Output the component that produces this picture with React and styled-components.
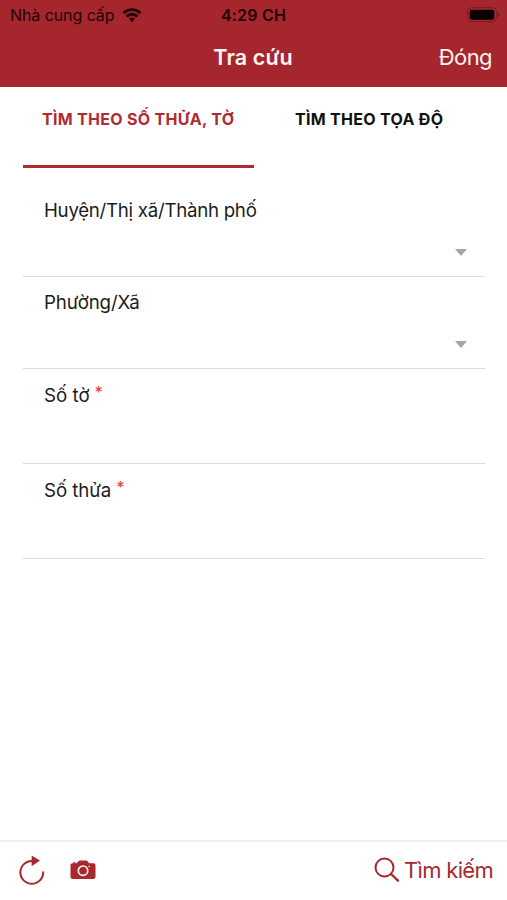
import React, { useState } from 'react';
import styled, { createGlobalStyle } from 'styled-components';

const GlobalStyle = createGlobalStyle`
  * {
    box-sizing: border-box;
  }

  body {
    margin: 0;
    background-color: #ffffff;
    font-family: Inter, 'Liberation Sans', sans-serif;
  }

  button {
    padding: 0;
    border: none;
    background: none;
    font-family: inherit;
    cursor: pointer;
  }
`;

const Container = styled.div`
  display: flex;
  flex-direction: column;
  height: 100vh;
  color: #1c1c1c;
  white-space: nowrap;
`;

const Header = styled.header`
  height: 87px;
  background-color: #a5262d;
`;

const StatusBar = styled.div`
  display: grid;
  grid-template-columns: 1fr auto 1fr;
  align-items: center;
  height: 30px;
  padding: 0 10px;
  color: #1f0305;
  font-size: 16px;
`;

const Carrier = styled.div`
  display: flex;
  align-items: center;
  gap: 7px;
  letter-spacing: -0.08px;
`;

const Clock = styled.div`
  font-weight: 600;
  letter-spacing: 0.2px;
`;

const Battery = styled.svg`
  justify-self: end;
  margin-right: -3px;
`;

const NavBar = styled.div`
  display: grid;
  grid-template-columns: 1fr auto 1fr;
  align-items: center;
  height: 54px;
  padding: 0 15px 0 14px;
  color: #fff4f4;
`;

const Title = styled.h1`
  grid-column: 2;
  margin: 0;
  font-size: 21.5px;
  font-weight: 600;
  letter-spacing: 0.1px;
`;

const CloseButton = styled.button`
  justify-self: end;
  color: inherit;
  font-size: 22px;
  letter-spacing: -0.6px;
`;

const Tabs = styled.div`
  display: flex;
  gap: 22px;
  height: 81px;
  margin-left: 23px;
`;

const Tab = styled.button`
  display: flex;
  align-items: flex-start;
  width: 231px;
  padding: 20px 0 0 19px;
  border-bottom: 3px solid ${props => props.$active ? '#b12a32' : 'transparent'};
  color: ${props => props.$active ? '#b12a32' : '#101010'};
  font-size: 16px;
  font-weight: 700;
  line-height: 24px;
  letter-spacing: 0.3px;
`;

const Form = styled.main`
  flex: 1;
  padding: 16px 22px 0 23px;
`;

const Field = styled.div`
  display: flex;
  flex-direction: column;
  height: ${props => props.$height}px;
  padding: ${props => props.$inset}px 18px 0 21px;
  border-bottom: 1px solid #dcdcdc;
`;

const Label = styled.label`
  font-size: 18.7px;
  line-height: 24px;
  letter-spacing: ${props => props.$tracking || 0}px;
`;

const Required = styled.span`
  margin-left: 5px;
  color: #f0433f;
  font-size: 16px;
  font-weight: 500;
  line-height: 1;
  vertical-align: 4px;
`;

const Arrow = styled.span`
  align-self: flex-end;
  margin-top: 26px;
  border: solid transparent;
  border-width: 7px 6.5px 0;
  border-top-color: #a6a6a6;
`;

const Toolbar = styled.footer`
  display: flex;
  align-items: center;
  height: 60px;
  padding: 0 14px 3px 18px;
  border-top: 2px solid #eeeeee;
  color: #a82830;
`;

const IconButton = styled.button`
  display: flex;
  margin-right: 24px;
  color: inherit;
`;

const SearchButton = styled.button`
  display: flex;
  align-items: center;
  gap: 4px;
  margin-left: auto;
  color: inherit;
  font-size: 22px;
  letter-spacing: -0.7px;
`;

const WifiIcon = () => (
  <svg width="20" height="15" viewBox="0 0 20 15" fill="currentColor">
    <path d="M10 3.1c2.7 0 5.2 1 7.2 2.9.2.2.4.2.6 0l1.4-1.4c.2-.2.2-.5 0-.7C16.7 1.5 13.5.2 10 .2S3.3 1.5.8 3.9c-.2.2-.2.5 0 .7L2.2 6c.2.2.4.2.6 0C4.8 4.1 7.3 3.1 10 3.1z" />
    <path d="M10 7.8c1.5 0 2.9.6 4 1.5.2.2.4.2.6 0L16 7.9c.2-.2.2-.5 0-.7-1.6-1.5-3.7-2.4-6-2.4s-4.4.9-6 2.4c-.2.2-.2.5 0 .7l1.4 1.4c.2.2.4.2.6 0 1.1-.9 2.5-1.5 4-1.5z" />
    <path d="M12.8 11.1c.2-.2.2-.5 0-.7-.8-.6-1.8-1-2.8-1s-2 .4-2.8 1c-.2.2-.2.5 0 .7l2.4 2.7c.2.2.6.2.8 0z" />
  </svg>
);

const BatteryIcon = () => (
  <Battery width="33" height="16" viewBox="0 0 33 16">
    <rect x="0.7" y="0.7" width="28.8" height="14" rx="4" fill="none" stroke="#78191f" />
    <rect x="2.7" y="2.7" width="24.6" height="10" rx="2.2" fill="#080001" />
    <path d="M31 5.5c1.8.7 1.8 4.2 0 4.9z" fill="#65151b" />
  </Battery>
);

const RefreshIcon = () => (
  <svg width="28" height="30" viewBox="0 0 28 30">
    <path d="M14.2 6A11.4 11.4 0 1 0 25.2 17.2" fill="none" stroke="currentColor" strokeWidth="2" strokeLinecap="round" />
    <path d="M13.6.6l8.4 5-8.4 5.6z" fill="currentColor" />
  </svg>
);

const CameraIcon = () => (
  <svg width="26" height="20" viewBox="0 0 26 20">
    <path d="M2.7 3.2h4.1l1.6-2C8.8.7 9.3.4 10 .4h6c.7 0 1.2.3 1.6.8l1.6 2h4.1c1.3 0 2.2.9 2.2 2.2v11.3c0 1.3-.9 2.2-2.2 2.2H2.7c-1.3 0-2.2-.9-2.2-2.2V5.4c0-1.3.9-2.2 2.2-2.2z" fill="currentColor" />
    <path d="M3 3.4V2.3h2.8v1.1z" fill="currentColor" />
    <circle cx="13" cy="10.7" r="4.7" fill="none" stroke="#fff0f0" strokeWidth="1.7" />
    <circle cx="19.2" cy="6.5" r="0.8" fill="#fff0f0" />
  </svg>
);

const SearchIcon = () => (
  <svg width="26" height="26" viewBox="0 0 26 26" fill="none" stroke="currentColor" strokeLinecap="round">
    <circle cx="10.5" cy="10.5" r="9" strokeWidth="2" />
    <path d="M17 17l7 6.7" strokeWidth="2.4" />
  </svg>
);

const tabs = ['TÌM THEO SỐ THỬA, TỜ', 'TÌM THEO TỌA ĐỘ'];

const fields = [
  { label: 'Huyện/Thị xã/Thành phố', height: 93, inset: 15, tracking: -0.28, select: true },
  { label: 'Phường/Xã', height: 92, inset: 14, tracking: -0.1, select: true },
  { label: 'Số tờ', height: 95, inset: 15, required: true },
  { label: 'Số thửa', height: 95, inset: 15, tracking: -0.08, required: true },
];

const App = () => {
  const [activeTab, setActiveTab] = useState(0);

  return (
    <Container>
      <GlobalStyle />
      <Header>
        <StatusBar>
          <Carrier>
            Nhà cung cấp
            <WifiIcon />
          </Carrier>
          <Clock>4:29 CH</Clock>
          <BatteryIcon />
        </StatusBar>
        <NavBar>
          <Title>Tra cứu</Title>
          <CloseButton>Đóng</CloseButton>
        </NavBar>
      </Header>

      <Tabs>
        {tabs.map((tab, index) => (
          <Tab key={tab} $active={index === activeTab} onClick={() => setActiveTab(index)}>
            {tab}
          </Tab>
        ))}
      </Tabs>

      <Form>
        {fields.map(field => (
          <Field key={field.label} $height={field.height} $inset={field.inset}>
            <Label $tracking={field.tracking}>
              {field.label}
              {field.required && <Required>*</Required>}
            </Label>
            {field.select && <Arrow />}
          </Field>
        ))}
      </Form>

      <Toolbar>
        <IconButton>
          <RefreshIcon />
        </IconButton>
        <IconButton>
          <CameraIcon />
        </IconButton>
        <SearchButton>
          <SearchIcon />
          Tìm kiếm
        </SearchButton>
      </Toolbar>
    </Container>
  );
};

export default App;
